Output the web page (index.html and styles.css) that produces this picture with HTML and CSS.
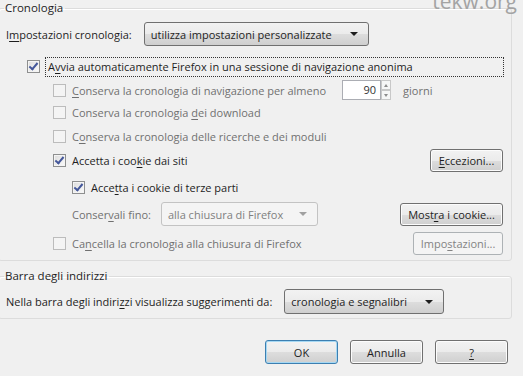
FILE: index.html
```html
<!DOCTYPE html>
<html lang="it">
<head>
    <meta charset="UTF-8">
    <title>Opzioni - Privacy</title>
    <link rel="stylesheet" href="styles.css">
</head>
<body>
    <div class="watermark">tekw.org</div>

    <fieldset class="group group-history">
        <legend>Cronologia</legend>

        <div class="row row-settings">
            <span class="label">I<u>m</u>postazioni cronologia:</span>
            <div class="select select-history">
                <span>utilizza impostazioni personalizzate</span>
                <span class="arrow"></span>
            </div>
        </div>

        <div class="row row-private">
            <span class="checkbox checked"></span>
            <span class="focus-label">A<u>v</u>via automaticamente Firefox in una sessione di navigazione anonima</span>
        </div>

        <div class="row row-days indent disabled">
            <span class="checkbox"></span>
            <span class="text"><u>C</u>onserva la cronologia di navigazione per almeno</span>
            <div class="spinner">
                <span class="spin-value">90</span>
                <span class="spin-buttons">
                    <span class="spin-up"></span>
                    <span class="spin-down"></span>
                </span>
            </div>
            <span class="text days">giorni</span>
        </div>

        <div class="row row-plain indent disabled">
            <span class="checkbox"></span>
            <span class="text">Conserva la cronologia <u>d</u>ei download</span>
        </div>

        <div class="row row-plain indent disabled">
            <span class="checkbox"></span>
            <span class="text">C<u>o</u>nserva la cronologia delle ricerche e dei moduli</span>
        </div>

        <div class="row row-cookies indent">
            <span class="checkbox checked"></span>
            <span class="text">Accetta i coo<u>k</u>ie dai siti</span>
            <button class="btn btn-exceptions"><u>E</u>ccezioni...</button>
        </div>

        <div class="row row-third indent-2">
            <span class="checkbox checked"></span>
            <span class="text">Acce<u>t</u>ta i cookie di terze parti</span>
        </div>

        <div class="row row-keep indent-2">
            <span class="text muted">Conser<u>v</u>ali fino:</span>
            <div class="select select-keep disabled-select">
                <span>alla chiusura di Firefox</span>
                <span class="arrow"></span>
            </div>
            <button class="btn btn-show">Most<u>r</u>a i cookie...</button>
        </div>

        <div class="row row-clear indent disabled">
            <span class="checkbox"></span>
            <span class="text">Ca<u>n</u>cella la cronologia alla chiusura di Firefox</span>
            <button class="btn btn-settings" disabled>Impo<u>s</u>tazioni...</button>
        </div>
    </fieldset>

    <fieldset class="group group-bar">
        <legend>Barra degli indirizzi</legend>
        <div class="row row-suggest">
            <span class="label">Nella barra degli indiri<u>z</u>zi visualizza suggerimenti da:</span>
            <div class="select select-suggest">
                <span>cronologia e segnalibri</span>
                <span class="arrow"></span>
            </div>
        </div>
    </fieldset>

    <div class="dialog-buttons">
        <button class="btn btn-dialog btn-default">OK</button>
        <button class="btn btn-dialog">Annulla</button>
        <button class="btn btn-dialog"><u>?</u></button>
    </div>
</body>
</html>
```

FILE: styles.css
```css
body {
    margin: 0;
    background-color: #f0f0f0;
    font-family: "Open Sans", "Noto Sans", sans-serif;
    font-size: 11px;
    color: #1e1e1e;
    width: 523px;
    height: 376px;
    overflow: hidden;
    position: relative;
}
u {
    text-decoration-thickness: 1px;
    text-underline-offset: 2px;
}
.watermark {
    position: absolute;
    top: -13px;
    right: 6px;
    font-family: "Open Sans", sans-serif;
    font-size: 21px;
    color: #a3a3a3;
}

/* group boxes */
.group {
    margin: 0 11px 0 -2px;
    padding: 0;
    border: 1px solid #dcdcdc;
    border-radius: 3px;
    box-shadow: inset 1px 1px 0 #fff;
    min-width: 0;
}
.group legend {
    margin-left: 5px;
    padding: 0 2px 0 1px;
    line-height: 16px;
    font-size: 11.5px;
}
.group-history {
    padding-bottom: 5px;
}
.group-bar {
    margin-top: 7px;
    padding-bottom: 4px;
}

.row {
    display: flex;
    align-items: center;
    padding-left: 7px;
    white-space: nowrap;
}
.indent {
    padding-left: 54px;
}
.indent-2 {
    padding-left: 73px;
}
.disabled .text,
.muted {
    color: #707070;
}

.row-settings { margin-top: 6px; height: 24px; }
.row-private { margin-top: 12px; height: 17px; padding-left: 28px; }
.row-days { margin-top: 5px; height: 20px; }
.row-plain { height: 24px; }
.row-plain:first-of-type { margin-top: 1px; }
.row-cookies { margin-top: 1px; height: 22px; }
.row-third { margin-top: 5px; height: 22px; }
.row-keep { margin-top: 4px; height: 24px; }
.row-clear { margin-top: 5px; height: 24px; }
.row-suggest { margin-top: 5px; height: 25px; }

.label {
    margin-right: 12px;
}

/* checkboxes */
.checkbox {
    width: 11px;
    height: 11px;
    border: 1px solid #8e8f8f;
    background: linear-gradient(135deg, #dcdcdc, #fbfbfb);
    box-shadow: inset 0 0 0 1px #f4f4f4;
    margin-right: 6px;
    flex: none;
    position: relative;
}
.disabled .checkbox {
    border-color: #bcbcbc;
    background: #f4f4f4;
    box-shadow: none;
}
.checkbox.checked::after {
    content: "";
    position: absolute;
    left: 3px;
    top: 0px;
    width: 3px;
    height: 7px;
    border: solid #44579a;
    border-width: 0 2px 2px 0;
    transform: rotate(40deg);
}

.focus-label {
    outline: 1px dotted #333;
    outline-offset: 0;
    padding: 1px 90px 2px 2px;
}

/* selects */
.select {
    display: flex;
    align-items: center;
    justify-content: space-between;
    height: 22px;
    padding: 0 10px 0 6px;
    border: 1px solid #707070;
    border-radius: 3px;
    background: linear-gradient(#f2f2f2 0%, #ebebeb 50%, #dddddd 51%, #cfcfcf 100%);
    box-sizing: border-box;
}
.select .arrow {
    width: 0;
    height: 0;
    border-left: 4px solid transparent;
    border-right: 4px solid transparent;
    border-top: 4px solid #1e1e1e;
}
.select-history {
    width: 225px;
    height: 24px;
}
.select-keep {
    width: 157px;
    height: 24px;
    margin-left: 10px;
}
.select-suggest {
    width: 160px;
    height: 25px;
}
.disabled-select {
    background: #f4f4f4;
    border-color: #c3c3c3;
    color: #808080;
}
.disabled-select .arrow {
    border-top-color: #a0a0a0;
}

/* spinner */
.spinner {
    display: flex;
    margin-left: 16px;
    height: 20px;
}
.spin-value {
    width: 39px;
    border: 1px solid #abadb3;
    background: #fff;
    text-align: right;
    padding-right: 4px;
    box-sizing: border-box;
    line-height: 18px;
    color: #333;
}
.spin-buttons {
    display: flex;
    flex-direction: column;
    width: 10px;
}
.spin-up,
.spin-down {
    flex: 1;
    border: 1px solid #c8c8c8;
    background: #f6f6f6;
    position: relative;
}
.spin-up::after,
.spin-down::after {
    content: "";
    position: absolute;
    left: 2px;
    top: 3px;
    border-left: 2px solid transparent;
    border-right: 2px solid transparent;
}
.spin-up::after { border-bottom: 3px solid #8c8c8c; }
.spin-down::after { border-top: 3px solid #8c8c8c; }
.days {
    margin-left: 12px;
}

/* buttons */
.btn {
    font-family: inherit;
    font-size: 11px;
    color: #1e1e1e;
    height: 23px;
    padding: 0 6px;
    border: 1px solid #707070;
    border-radius: 3px;
    background: linear-gradient(#f2f2f2 0%, #ebebeb 50%, #dddddd 51%, #cfcfcf 100%);
    box-shadow: inset 0 0 0 1px #fcfcfc;
    margin-left: auto;
}
.btn:disabled {
    color: #838383;
    border-color: #adb2b5;
    background: #f4f4f4;
    box-shadow: none;
}
.btn-exceptions { width: 73px; margin-right: 8px; }
.btn-show { width: 103px; margin-right: 8px; }
.btn-settings { width: 90px; margin-right: 8px; }

.dialog-buttons {
    display: flex;
    justify-content: flex-end;
    gap: 12px;
    margin: 21px 15px 0 0;
}
.btn-dialog {
    width: 73px;
    height: 24px;
    margin-left: 0;
}
.btn-default {
    border-color: #3c7fb1;
    box-shadow: inset 0 0 0 1px #a6d8f3;
}
```
